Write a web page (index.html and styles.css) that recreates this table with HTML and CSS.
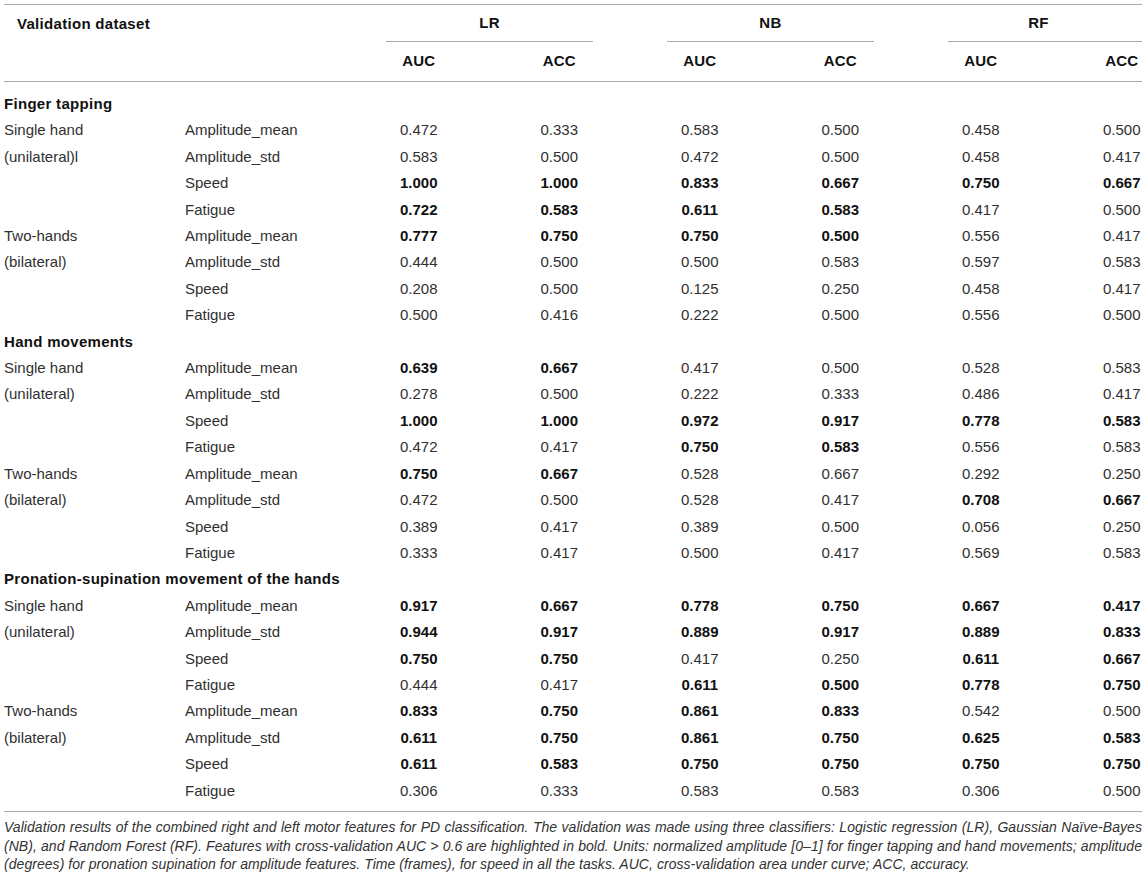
FILE: index.html
```html
<!DOCTYPE html>
<html>
<head>
<meta charset="utf-8">
<link rel="stylesheet" href="styles.css">
</head>
<body>
<div class="wrap">
<table class="tbl">
<colgroup>
<col class="c-grp"><col class="c-feat"><col class="c-v"><col class="c-v"><col class="c-v"><col class="c-v"><col class="c-v"><col class="c-last">
</colgroup>
<thead>
<tr class="h1">
<th colspan="2" class="title">Validation dataset</th>
<th colspan="2"><div class="grp">LR</div></th>
<th colspan="2"><div class="grp">NB</div></th>
<th colspan="2"><div class="grp last">RF</div></th>
</tr>
<tr class="h2">
<th colspan="2"></th>
<th class="v">AUC</th><th class="v">ACC</th>
<th class="v">AUC</th><th class="v">ACC</th>
<th class="v">AUC</th><th class="v lastc">ACC</th>
</tr>
</thead>
<tbody>
<tr class="sec first"><td colspan="8">Finger tapping</td></tr>
<tr><td>Single hand</td><td>Amplitude_mean</td><td class="v">0.472</td><td class="v">0.333</td><td class="v">0.583</td><td class="v">0.500</td><td class="v">0.458</td><td class="v lastc">0.500</td></tr>
<tr><td>(unilateral)l</td><td>Amplitude_std</td><td class="v">0.583</td><td class="v">0.500</td><td class="v">0.472</td><td class="v">0.500</td><td class="v">0.458</td><td class="v lastc">0.417</td></tr>
<tr><td></td><td>Speed</td><td class="v b">1.000</td><td class="v b">1.000</td><td class="v b">0.833</td><td class="v b">0.667</td><td class="v b">0.750</td><td class="v lastc b">0.667</td></tr>
<tr><td></td><td>Fatigue</td><td class="v b">0.722</td><td class="v b">0.583</td><td class="v b">0.611</td><td class="v b">0.583</td><td class="v">0.417</td><td class="v lastc">0.500</td></tr>
<tr><td>Two-hands</td><td>Amplitude_mean</td><td class="v b">0.777</td><td class="v b">0.750</td><td class="v b">0.750</td><td class="v b">0.500</td><td class="v">0.556</td><td class="v lastc">0.417</td></tr>
<tr><td>(bilateral)</td><td>Amplitude_std</td><td class="v">0.444</td><td class="v">0.500</td><td class="v">0.500</td><td class="v">0.583</td><td class="v">0.597</td><td class="v lastc">0.583</td></tr>
<tr><td></td><td>Speed</td><td class="v">0.208</td><td class="v">0.500</td><td class="v">0.125</td><td class="v">0.250</td><td class="v">0.458</td><td class="v lastc">0.417</td></tr>
<tr><td></td><td>Fatigue</td><td class="v">0.500</td><td class="v">0.416</td><td class="v">0.222</td><td class="v">0.500</td><td class="v">0.556</td><td class="v lastc">0.500</td></tr>
<tr class="sec"><td colspan="8">Hand movements</td></tr>
<tr><td>Single hand</td><td>Amplitude_mean</td><td class="v b">0.639</td><td class="v b">0.667</td><td class="v">0.417</td><td class="v">0.500</td><td class="v">0.528</td><td class="v lastc">0.583</td></tr>
<tr><td>(unilateral)</td><td>Amplitude_std</td><td class="v">0.278</td><td class="v">0.500</td><td class="v">0.222</td><td class="v">0.333</td><td class="v">0.486</td><td class="v lastc">0.417</td></tr>
<tr><td></td><td>Speed</td><td class="v b">1.000</td><td class="v b">1.000</td><td class="v b">0.972</td><td class="v b">0.917</td><td class="v b">0.778</td><td class="v lastc b">0.583</td></tr>
<tr><td></td><td>Fatigue</td><td class="v">0.472</td><td class="v">0.417</td><td class="v b">0.750</td><td class="v b">0.583</td><td class="v">0.556</td><td class="v lastc">0.583</td></tr>
<tr><td>Two-hands</td><td>Amplitude_mean</td><td class="v b">0.750</td><td class="v b">0.667</td><td class="v">0.528</td><td class="v">0.667</td><td class="v">0.292</td><td class="v lastc">0.250</td></tr>
<tr><td>(bilateral)</td><td>Amplitude_std</td><td class="v">0.472</td><td class="v">0.500</td><td class="v">0.528</td><td class="v">0.417</td><td class="v b">0.708</td><td class="v lastc b">0.667</td></tr>
<tr><td></td><td>Speed</td><td class="v">0.389</td><td class="v">0.417</td><td class="v">0.389</td><td class="v">0.500</td><td class="v">0.056</td><td class="v lastc">0.250</td></tr>
<tr><td></td><td>Fatigue</td><td class="v">0.333</td><td class="v">0.417</td><td class="v">0.500</td><td class="v">0.417</td><td class="v">0.569</td><td class="v lastc">0.583</td></tr>
<tr class="sec"><td colspan="8">Pronation-supination movement of the hands</td></tr>
<tr><td>Single hand</td><td>Amplitude_mean</td><td class="v b">0.917</td><td class="v b">0.667</td><td class="v b">0.778</td><td class="v b">0.750</td><td class="v b">0.667</td><td class="v lastc b">0.417</td></tr>
<tr><td>(unilateral)</td><td>Amplitude_std</td><td class="v b">0.944</td><td class="v b">0.917</td><td class="v b">0.889</td><td class="v b">0.917</td><td class="v b">0.889</td><td class="v lastc b">0.833</td></tr>
<tr><td></td><td>Speed</td><td class="v b">0.750</td><td class="v b">0.750</td><td class="v">0.417</td><td class="v">0.250</td><td class="v b">0.611</td><td class="v lastc b">0.667</td></tr>
<tr><td></td><td>Fatigue</td><td class="v">0.444</td><td class="v">0.417</td><td class="v b">0.611</td><td class="v b">0.500</td><td class="v b">0.778</td><td class="v lastc b">0.750</td></tr>
<tr><td>Two-hands</td><td>Amplitude_mean</td><td class="v b">0.833</td><td class="v b">0.750</td><td class="v b">0.861</td><td class="v b">0.833</td><td class="v">0.542</td><td class="v lastc">0.500</td></tr>
<tr><td>(bilateral)</td><td>Amplitude_std</td><td class="v b">0.611</td><td class="v b">0.750</td><td class="v b">0.861</td><td class="v b">0.750</td><td class="v b">0.625</td><td class="v lastc b">0.583</td></tr>
<tr><td></td><td>Speed</td><td class="v b">0.611</td><td class="v b">0.583</td><td class="v b">0.750</td><td class="v b">0.750</td><td class="v b">0.750</td><td class="v lastc b">0.750</td></tr>
<tr class="lastrow"><td></td><td>Fatigue</td><td class="v">0.306</td><td class="v">0.333</td><td class="v">0.583</td><td class="v">0.583</td><td class="v">0.306</td><td class="v lastc">0.500</td></tr>
</tbody>
</table>
<p class="caption">Validation results of the combined right and left motor features for PD classification. The validation was made using three classifiers: Logistic regression (LR), Gaussian Naïve-Bayes (NB), and Random Forest (RF). Features with cross-validation AUC &gt; 0.6 are highlighted in bold. Units: normalized amplitude [0–1] for finger tapping and hand movements; amplitude (degrees) for pronation supination for amplitude features. Time (frames), for speed in all the tasks. AUC, cross-validation area under curve; ACC, accuracy.</p>
</div>
</body>
</html>
```

FILE: styles.css
```css
html, body {
  margin: 0;
  padding: 0;
  background: #ffffff;
}

body {
  font-family: "Liberation Sans", Arial, sans-serif;
  color: #303030;
}

.wrap {
  padding: 4px 4px 0 4px;
  width: 1138px;
}

.tbl {
  width: 1138px;
  table-layout: fixed;
  border-collapse: collapse;
  font-size: 15px;
  border-top: 1px solid #a9a9a9;
  border-bottom: 1px solid #a9a9a9;
}

.c-grp { width: 181px; }
.c-feat { width: 201px; }
.c-v { width: 140.5px; }
.c-last { width: 53.5px; }

.tbl th,
.tbl td {
  padding: 0;
  text-align: left;
  vertical-align: middle;
  white-space: nowrap;
}

.tbl th {
  font-weight: bold;
  color: #111;
}

.h1 th {
  vertical-align: top;
}

.h1 .title {
  padding-left: 13px;
  line-height: 37px;
  letter-spacing: 0.3px;
}

.grp {
  width: 207px;
  height: 36px;
  line-height: 36px;
  text-align: center;
  border-bottom: 1px solid #a9a9a9;
  letter-spacing: 0.3px;
}

.grp.last {
  width: auto;
  padding-right: 13px;
}

.h2 th {
  line-height: 38px;
  padding-bottom: 1px;
  border-bottom: 1px solid #a9a9a9;
  letter-spacing: 0.2px;
}

.tbl .v {
  text-align: center;
  padding-right: 75px;
}

.tbl .v.lastc {
  padding-right: 0;
  padding-left: 13px;
}

.tbl td {
  height: 26.4px;
  line-height: 26.4px;
}

.tbl td.b {
  font-weight: bold;
  color: #111;
}

.sec td {
  font-weight: bold;
  color: #111;
  letter-spacing: 0.3px;
}

.sec.first td {
  padding-top: 9px;
}

.lastrow td {
  padding-bottom: 7px;
}

.caption {
  margin: 0;
  padding-top: 6px;
  font-size: 14px;
  line-height: 18.7px;
  font-style: italic;
  color: #333;
  text-align: justify;
  letter-spacing: 0.05px;
}
```
